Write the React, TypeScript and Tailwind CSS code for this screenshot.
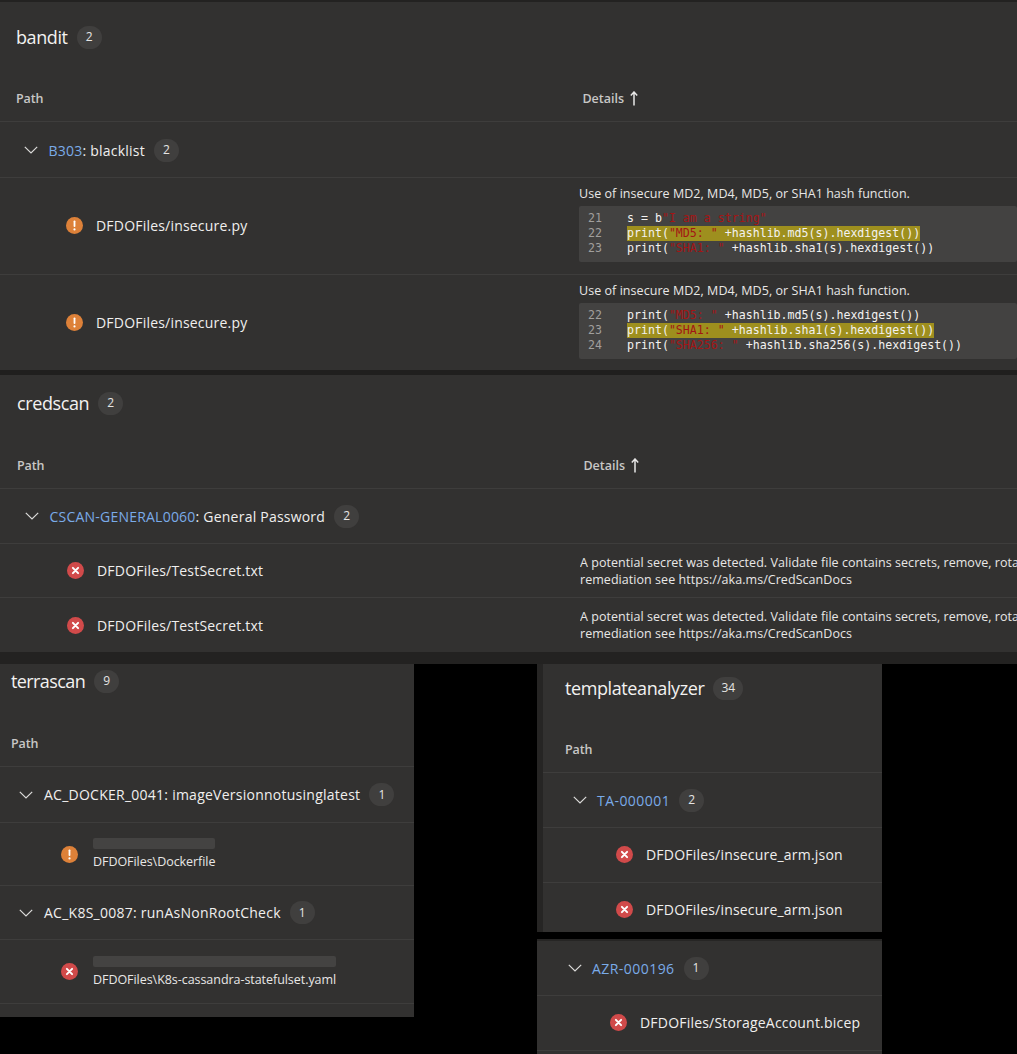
import React from "react";

const sans = "font-['Open_Sans','Noto_Sans',sans-serif]";

function WarnIcon() {
  return (
    <svg width="17" height="17" viewBox="0 0 17 17" className="shrink-0">
      <circle cx="8.5" cy="8.5" r="8.5" fill="#dd8139" />
      <rect x="7.6" y="3.4" width="1.8" height="6.6" rx="0.8" fill="#fff" />
      <circle cx="8.5" cy="12.4" r="1.1" fill="#fff" />
    </svg>
  );
}

function ErrorIcon() {
  return (
    <svg width="17" height="17" viewBox="0 0 17 17" className="shrink-0">
      <circle cx="8.5" cy="8.5" r="8.5" fill="#d14a4a" />
      <path d="M5.9 5.9l5.2 5.2M11.1 5.9l-5.2 5.2" stroke="#fff" strokeWidth="2" strokeLinecap="round" />
    </svg>
  );
}

function Chevron() {
  return (
    <svg width="14" height="8" viewBox="0 0 14 8" className="shrink-0">
      <path d="M0.8 0.8L7 7L13.2 0.8" fill="none" stroke="#dcdbda" strokeWidth="1.2" />
    </svg>
  );
}

function UpArrow() {
  return (
    <svg width="10" height="15" viewBox="0 0 10 15" className="ml-[5px] shrink-0 -translate-y-[1px]">
      <path d="M5 14.5V1M1.8 4.4L5 1L8.2 4.4" fill="none" stroke="#e8e7e6" strokeWidth="1.5" />
    </svg>
  );
}

function Badge({ n }: { n: number }) {
  return (
    <span className="ml-[9px] inline-flex h-[23px] min-w-[25px] items-center justify-center rounded-full bg-[#403f3e] px-[8px] text-[12px] tracking-normal text-[#e6e5e4]">
      {n}
    </span>
  );
}

function Title({ name, n, className, tracking = "tracking-[-0.4px]" }: { name: string; n: number; className: string; tracking?: string }) {
  return (
    <div className={"flex items-center text-[18px] text-[#f3f2f1] " + className}>
      <span className={tracking}>{name}</span>
      <Badge n={n} />
    </div>
  );
}

function HeaderRow({
  left,
  details,
  height,
  detailsLeft,
}: {
  left: number;
  details?: boolean;
  height: string;
  detailsLeft?: string;
}) {
  return (
    <div className={"flex items-center border-b border-[#3e3d3c] text-[12.5px] font-semibold text-[#c8c7c6] " + height}>
      <span style={{ marginLeft: left }} className="tracking-[-0.1px]">
        Path
      </span>
      {details && (
        <span className={"flex items-center " + (detailsLeft ?? "")}>
          Details
          <UpArrow />
        </span>
      )}
    </div>
  );
}

function GroupRow({
  left,
  height,
  link,
  rest,
  n,
  gap = "ml-[10.5px]",
  tracking = "tracking-[0.22px]",
}: {
  left: number;
  height: string;
  link?: string;
  rest?: string;
  n: number;
  gap?: string;
  tracking?: string;
}) {
  return (
    <div className={"flex items-center border-b border-[#3e3d3c] text-[14px] text-[#f0efee] whitespace-nowrap " + height} style={{ paddingLeft: left }}>
      <Chevron />
      <span className={gap + " " + tracking}>
        {link && <span className="text-[#7aabe8]">{link}</span>}
        {rest}
      </span>
      <Badge n={n} />
    </div>
  );
}

function Code({ lines }: { lines: [string, string, string, string][] }) {
  return (
    <div className="mt-[4px] rounded-[2px] bg-[#434241] pt-[5px] pb-[6px] pl-[9px] font-['DejaVu_Sans_Mono',monospace] text-[11.6px] leading-[15px] text-[#f3f2f1] whitespace-pre">
      {lines.map(([no, a, s, b], i) => (
        <div key={no} className="flex h-[15px]">
          <span className="w-[39px] shrink-0 text-[#a19f9d]">{no}</span>
          <span className={i === 1 ? "bg-[#9e8f1e]" : ""}>
            {a}
            <span className="text-[#a31515]">{s}</span>
            {b}
          </span>
        </div>
      ))}
    </div>
  );
}

function FileRow({
  icon,
  path,
  left,
  height,
  details,
  border = true,
  gap = "ml-[13px]",
  pathWidth = "",
}: {
  icon: "warn" | "error";
  path: string;
  left: number;
  height: string;
  details?: React.ReactNode;
  border?: boolean;
  gap?: string;
  pathWidth?: string;
}) {
  return (
    <div className={"flex items-center text-[14px] text-[#f0efee] whitespace-nowrap " + height + (border ? " border-b border-[#3e3d3c]" : "")}>
      <div className={"flex shrink-0 items-center " + pathWidth} style={{ paddingLeft: left }}>
        {icon === "warn" ? <WarnIcon /> : <ErrorIcon />}
        <span className={gap + " tracking-[0.2px]"}>{path}</span>
      </div>
      {details}
    </div>
  );
}

function BanditDetails({ lines, top }: { lines: [string, string, string, string][]; top: string }) {
  return (
    <div className={"min-w-0 flex-1 self-start " + top}>
      <div className="text-[12.5px] leading-[17px] tracking-[0.05px] text-[#e8e7e6]">Use of insecure MD2, MD4, MD5, or SHA1 hash function.</div>
      <Code lines={lines} />
    </div>
  );
}

function SecretDetails() {
  return (
    <div className="min-w-0 flex-1 overflow-hidden text-[12.5px] leading-[17px] tracking-[0.05px] text-[#e8e7e6] whitespace-nowrap">
      A potential secret was detected. Validate file contains secrets, remove, rotate credentials, and use
      <br />
      remediation see https://aka.ms/CredScanDocs
    </div>
  );
}

function RedactedRow({ icon, bar, path, height }: { icon: "warn" | "error"; bar: string; path: string; height: string }) {
  return (
    <div className={"flex items-center border-b border-[#3e3d3c] pl-[61px] " + height}>
      {icon === "warn" ? <WarnIcon /> : <ErrorIcon />}
      <div className="ml-[15px]">
        <div className={"h-[11px] rounded-[2px] bg-[#444342] " + bar} />
        <div className="mt-[4px] text-[12.5px] leading-[17px] tracking-[-0.05px] text-[#e8e7e6]">{path}</div>
      </div>
    </div>
  );
}

export default function App() {
  return (
    <div className={"h-[1054px] w-[1017px] overflow-hidden bg-black " + sans}>
      <section className="h-[370px] border-t-2 border-[#232221] bg-[#323130]">
        <Title name="bandit" n={2} className="h-[70px] pl-[16px]" />
        <HeaderRow left={16} details height="h-[50px] pt-[6px]" detailsLeft="ml-[539px]" />
        <GroupRow left={24} height="h-[56px] pt-[1px]" link="B303" rest=": blacklist" n={2} />
        <FileRow
          icon="warn"
          path="DFDOFiles/insecure.py"
          left={66}
          pathWidth="w-[579px] pb-[2px]"
          height="h-[97px]"
          details={
            <BanditDetails
              top="mt-[7px]"
              lines={[
                ["21", "s = b", '"I am a string"', ""],
                ["22", "print(", '"MD5: "', " +hashlib.md5(s).hexdigest())"],
                ["23", "print(", '"SHA1: "', " +hashlib.sha1(s).hexdigest())"],
              ]}
            />
          }
        />
        <FileRow
          icon="warn"
          path="DFDOFiles/insecure.py"
          left={66}
          pathWidth="w-[579px]"
          height="h-[95px]"
          border={false}
          details={
            <BanditDetails
              top="mt-[7px]"
              lines={[
                ["22", "print(", '"MD5: "', " +hashlib.md5(s).hexdigest())"],
                ["23", "print(", '"SHA1: "', " +hashlib.sha1(s).hexdigest())"],
                ["24", "print(", '"SHA256: "', " +hashlib.sha256(s).hexdigest())"],
              ]}
            />
          }
        />
      </section>
      <div className="h-[5px] bg-[#201f1e]" />
      <section className="h-[277px] bg-[#323130]">
        <Title name="credscan" n={2} className="h-[56px] pl-[17px]" />
        <HeaderRow left={17} details height="h-[58px] pt-[14px]" detailsLeft="ml-[539px]" />
        <GroupRow left={25} height="h-[55px]" link="CSCAN-GENERAL0060" rest=": General Password" n={2} />
        <FileRow icon="error" path="DFDOFiles/TestSecret.txt" left={67} pathWidth="w-[580px]" height="h-[54px]" details={<SecretDetails />} />
        <FileRow icon="error" path="DFDOFiles/TestSecret.txt" left={67} pathWidth="w-[580px]" height="h-[54px]" border={false} details={<SecretDetails />} />
      </section>
      <div className="h-[12px] bg-[#232221]" />
      <div className="flex">
        <section className="h-[353px] w-[414px] bg-[#323130]">
          <Title name="terrascan" n={9} tracking="tracking-[-0.6px]" className="h-[34px] pl-[11px]" />
          <HeaderRow left={11} height="h-[69px] pt-[24px]" />
          <GroupRow left={19} height="h-[56px]" gap="ml-[11px]" tracking="tracking-[0.25px]" rest="AC_DOCKER_0041: imageVersionnotusinglatest" n={1} />
          <RedactedRow icon="warn" bar="w-[122px]" path="DFDOFiles\Dockerfile" height="h-[63px]" />
          <GroupRow left={19} height="h-[54px]" gap="ml-[11px]" tracking="tracking-[0.25px]" rest="AC_K8S_0087: runAsNonRootCheck" n={1} />
          <RedactedRow icon="error" bar="w-[243px]" path="DFDOFiles\K8s-cassandra-statefulset.yaml" height="h-[64px]" />
        </section>
        <div className="ml-[123px] w-[345px]">
          <section className="flex h-[268px] overflow-hidden bg-[#323130]">
            <div className="w-[6px] bg-[#262524]" />
            <div className="flex-1">
              <Title name="templateanalyzer" n={34} className="h-[48px] pl-[22px]" />
              <HeaderRow left={22} height="h-[61px] pt-[16px]" />
              <GroupRow left={30} height="h-[55px]" gap="ml-[10px]" tracking="tracking-[0.45px]" link="TA-000001" n={2} />
              <FileRow icon="error" path="DFDOFiles/insecure_arm.json" left={73} height="h-[55px]" pathWidth="pb-[2px]" />
              <FileRow icon="error" path="DFDOFiles/insecure_arm.json" left={73} height="h-[55px]" pathWidth="pb-[2px]" border={false} />
            </div>
          </section>
          <section className="mt-[7px] h-[115px] border-t-2 border-[#262524] bg-[#323130]">
            <GroupRow left={31} height="h-[55px]" gap="ml-[10px]" tracking="tracking-[0.45px]" link="AZR-000196" n={1} />
            <FileRow icon="error" path="DFDOFiles/StorageAccount.bicep" left={73} height="h-[55px]" pathWidth="pb-[1px]" />
          </section>
        </div>
      </div>
    </div>
  );
}
